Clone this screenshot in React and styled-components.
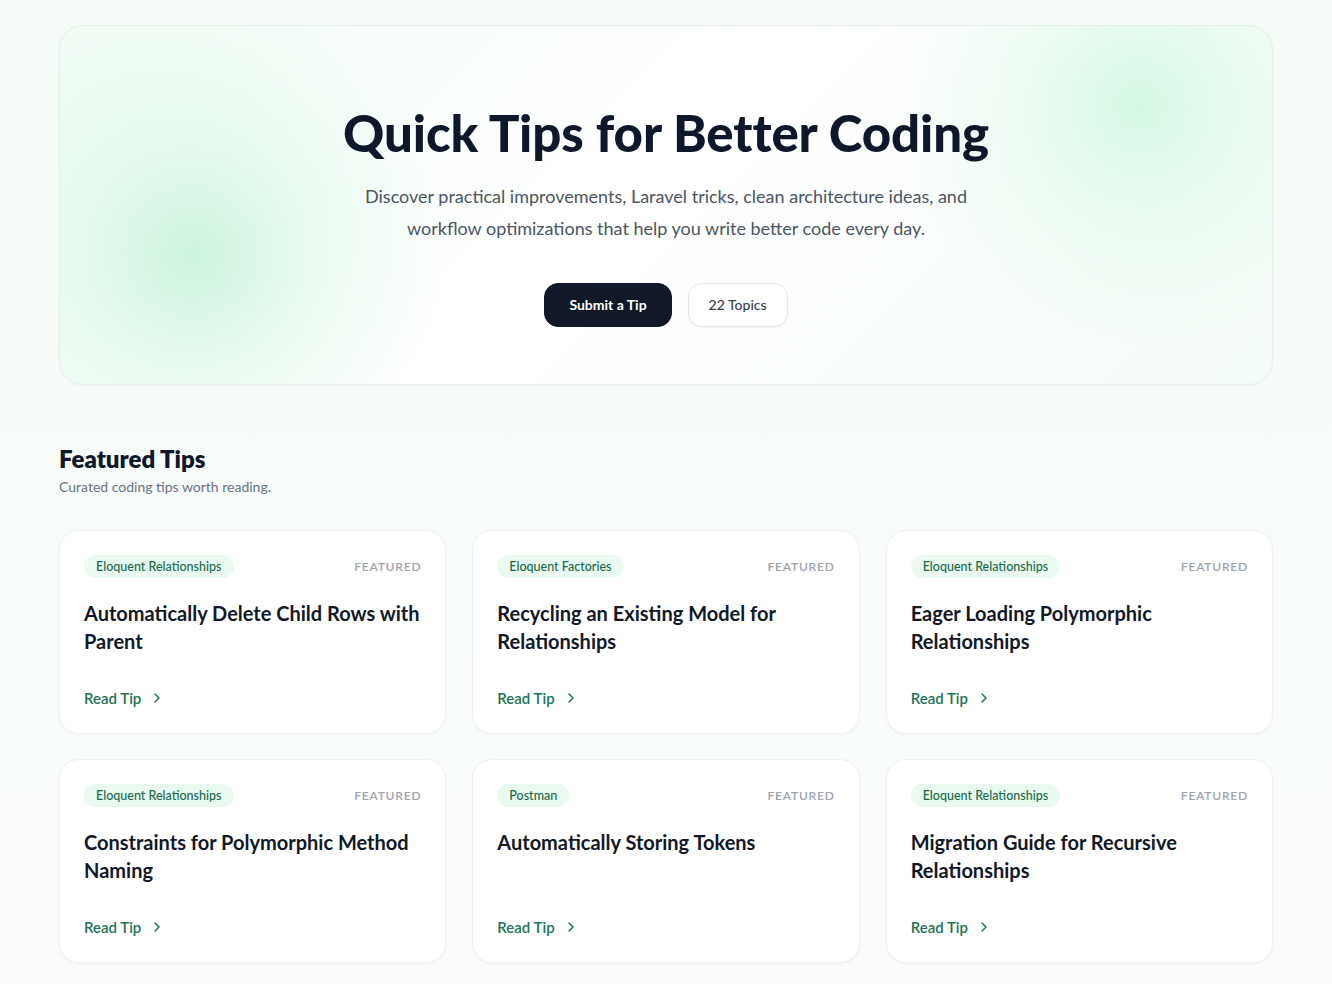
import React from 'react';
import styled, { createGlobalStyle } from 'styled-components';

const GlobalStyle = createGlobalStyle`
  * { box-sizing: border-box; }
  body {
    margin: 0;
    font-family: "Lato", "Noto Sans", sans-serif;
    background: linear-gradient(180deg, #f5fbf7 0%, #f8fcfa 60%, #fafcfb 100%);
    color: #0f172a;
  }
`;

const Page = styled.div`
  width: 1214px;
  margin: 0 auto;
  padding: 25px 0 40px;
`;

const Hero = styled.section`
  border: 1px solid #e6efe9;
  border-radius: 24px;
  padding: 80px 40px 57px;
  text-align: center;
  background:
    radial-gradient(circle at 11% 64%, rgba(190, 240, 212, 0.75) 0, rgba(205, 245, 222, 0.35) 120px, rgba(255, 255, 255, 0) 250px),
    radial-gradient(circle at 89% 22%, rgba(200, 246, 220, 0.75) 0, rgba(214, 248, 229, 0.4) 110px, rgba(255, 255, 255, 0) 240px),
    linear-gradient(135deg, #f0fcf5 0%, #ffffff 45%, #f4fcf7 100%);
  box-shadow: 0 1px 3px rgba(15, 23, 42, 0.04);
`;

const Title = styled.h1`
  margin: 0;
  font-size: 51px;
  line-height: 1.05;
  font-weight: 900;
  letter-spacing: -0.1px;
  color: #0f172a;
`;

const Lead = styled.p`
  margin: 20px auto 0;
  max-width: 640px;
  font-size: 18px;
  line-height: 32px;
  color: #4b5563;
`;

const Actions = styled.div`
  display: flex;
  justify-content: center;
  gap: 16px;
  margin-top: 39px;
`;

const Button = styled.button`
  height: 44px;
  padding: 0 ${p => (p.$primary ? '24px' : '20px')};
  border-radius: 14px;
  font-family: inherit;
  font-size: 14px;
  font-weight: ${p => (p.$primary ? 700 : 500)};
  border: 1px solid ${p => (p.$primary ? '#0f172a' : '#e5e7eb')};
  background: ${p => (p.$primary ? '#111827' : '#ffffff')};
  color: ${p => (p.$primary ? '#ffffff' : '#374151')};
  box-shadow: ${p => (p.$primary ? 'none' : '0 1px 2px rgba(15,23,42,0.05)')};
`;

const Section = styled.section`
  margin-top: 58px;
`;

const SectionTitle = styled.h2`
  margin: 0;
  font-size: 24px;
  line-height: 32px;
  font-weight: 800;
  color: #0f172a;
`;

const SectionSub = styled.p`
  margin: 3px 0 0;
  font-size: 14px;
  color: #6b7280;
`;

const Grid = styled.div`
  display: grid;
  grid-template-columns: repeat(3, 1fr);
  gap: 25px 26px;
  margin-top: 35px;
`;

const Card = styled.article`
  background: #ffffff;
  border: 1px solid #eef1ef;
  border-radius: 20px;
  padding: 24px 24px 26px;
  height: 204px;
  display: flex;
  flex-direction: column;
  box-shadow: 0 1px 3px rgba(15, 23, 42, 0.04);
`;

const CardTop = styled.div`
  display: flex;
  align-items: center;
  justify-content: space-between;
`;

const Tag = styled.span`
  display: inline-block;
  padding: 4px 12px;
  border-radius: 999px;
  background: #ebfaf1;
  color: #166b4c;
  font-size: 12.5px;
  font-weight: 500;
  line-height: 15px;
`;

const Featured = styled.span`
  font-size: 12px;
  font-weight: 600;
  letter-spacing: 0.8px;
  color: #9ca3af;
`;

const CardTitle = styled.h3`
  margin: 21px 0 0;
  font-size: 20px;
  line-height: 28px;
  font-weight: 700;
  color: #111827;
  flex: 1;
`;

const ReadLink = styled.a`
  display: inline-flex;
  align-items: center;
  gap: 8px;
  font-size: 15px;
  font-weight: 600;
  color: #1d7355;
  text-decoration: none;
`;

const Chevron = () => (
  <svg width="16" height="16" viewBox="0 0 24 24" fill="none" stroke="currentColor" strokeWidth="2.2" strokeLinecap="round" strokeLinejoin="round">
    <path d="m9 18 6-6-6-6" />
  </svg>
);

const tips = [
  { tag: 'Eloquent Relationships', title: 'Automatically Delete Child Rows with Parent' },
  { tag: 'Eloquent Factories', title: 'Recycling an Existing Model for Relationships' },
  { tag: 'Eloquent Relationships', title: 'Eager Loading Polymorphic Relationships' },
  { tag: 'Eloquent Relationships', title: 'Constraints for Polymorphic Method Naming' },
  { tag: 'Postman', title: 'Automatically Storing Tokens' },
  { tag: 'Eloquent Relationships', title: 'Migration Guide for Recursive Relationships' },
];

const App = () => (
  <>
    <GlobalStyle />
    <Page>
      <Hero>
        <Title>Quick Tips for Better Coding</Title>
        <Lead>
          Discover practical improvements, Laravel tricks, clean architecture ideas, and workflow optimizations that help you write better code every day.
        </Lead>
        <Actions>
          <Button $primary>Submit a Tip</Button>
          <Button>22 Topics</Button>
        </Actions>
      </Hero>

      <Section>
        <SectionTitle>Featured Tips</SectionTitle>
        <SectionSub>Curated coding tips worth reading.</SectionSub>
        <Grid>
          {tips.map((tip, i) => (
            <Card key={i}>
              <CardTop>
                <Tag>{tip.tag}</Tag>
                <Featured>FEATURED</Featured>
              </CardTop>
              <CardTitle>{tip.title}</CardTitle>
              <ReadLink href="#">
                Read Tip <Chevron />
              </ReadLink>
            </Card>
          ))}
        </Grid>
      </Section>
    </Page>
  </>
);

export default App;
